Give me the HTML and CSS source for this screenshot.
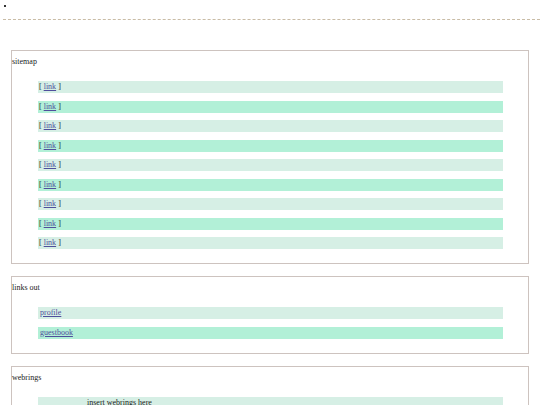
FILE: index.html
```
<!DOCTYPE html>
<html>
<head lang="en">
    <meta charset="UTF-8">
    <title>sitemap</title>
    <link rel="stylesheet" href="styles.css">
</head>
<body>
<div id="top">
    <span class="dot"></span>
</div>
<div class="box">
    <p class="title">sitemap</p>
    <ul class="rows">
        <li>[ <a href="#">link</a> ]</li>
        <li>[ <a href="#">link</a> ]</li>
        <li>[ <a href="#">link</a> ]</li>
        <li>[ <a href="#">link</a> ]</li>
        <li>[ <a href="#">link</a> ]</li>
        <li>[ <a href="#">link</a> ]</li>
        <li>[ <a href="#">link</a> ]</li>
        <li>[ <a href="#">link</a> ]</li>
        <li>[ <a href="#">link</a> ]</li>
    </ul>
</div>
<div class="box">
    <p class="title">links out</p>
    <ul class="rows">
        <li class="out"><a href="#">profile</a></li>
        <li class="out"><a href="#">guestbook</a></li>
    </ul>
</div>
<div class="box">
    <p class="title">webrings</p>
    <ul class="rows">
        <li class="ring">insert webrings here</li>
    </ul>
</div>
</body>
</html>
```

FILE: styles.css
```
body{padding:0;margin:0;font-family:"Liberation Serif","Times New Roman",serif;font-size:8px;color:#222;background:#fff;}
#top{height:14px;padding-top:5px;margin:0 0 0 3px;border-bottom:1px dashed #c9bca6;}
#top .dot{display:block;width:2px;height:2px;background:#333;margin-left:1px;}
.box{width:516px;margin:30px auto 0 11px;border:1px solid #cdc3bf;padding:0 0 14px;}
.box + .box{margin-top:12px;}
.title{margin:0;padding:6px 0 0 0;height:10px;line-height:10px;}
.rows{list-style:none;margin:14px 25px 0 26px;padding:0;display:flex;flex-direction:column;gap:7.5px;}
.rows li{height:12px;line-height:12px;padding-left:1px;background:#d6efe5;}
.rows li:nth-child(even){background:#b2f0d7;}
.rows li.out{padding-left:2px;}
.rows li.ring{padding-left:49px;}
.rows a{color:#4f4f9c;}
```
